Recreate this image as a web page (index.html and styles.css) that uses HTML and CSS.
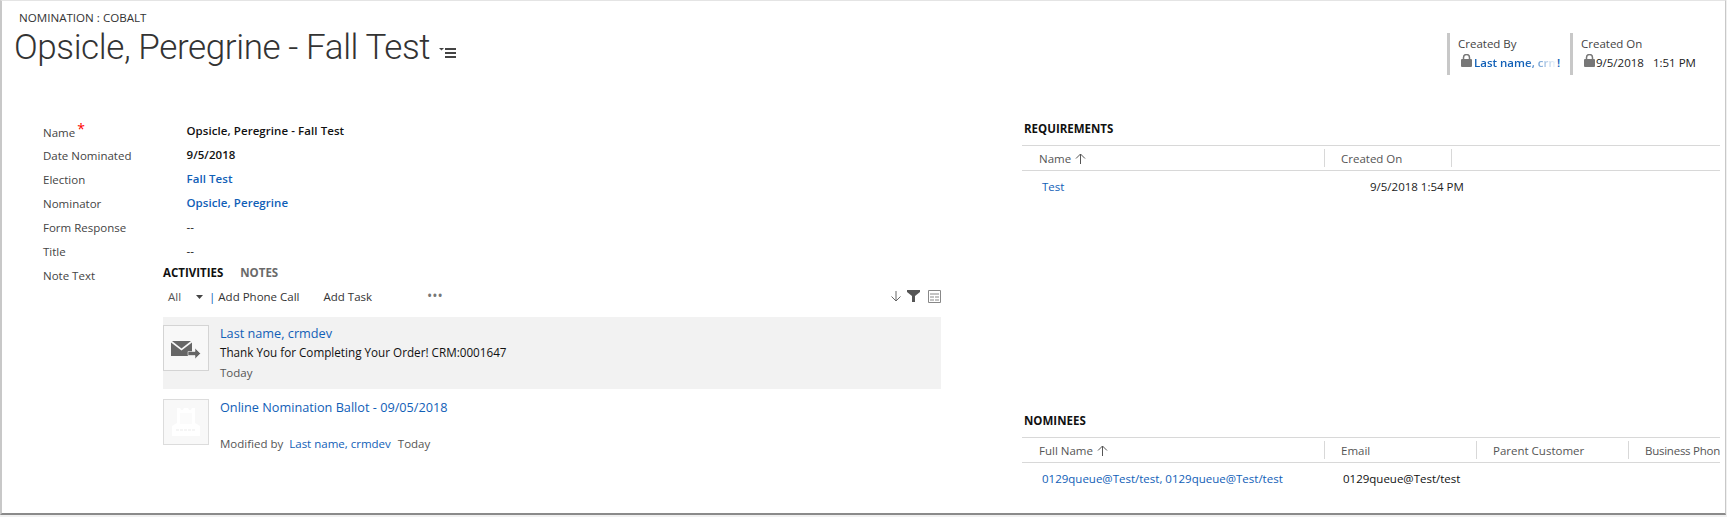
FILE: index.html
```html
<!DOCTYPE html>
<html lang="en">
<head>
    <meta charset="UTF-8">
    <title>Nomination : Cobalt</title>
    <link rel="stylesheet" href="styles.css">
</head>
<body>

<div class="window">
    <!-- Header -->
    <div class="header">
        <div class="title-block">
            <div class="entity-name">NOMINATION : COBALT</div>
            <div class="title-row">
                <h1>Opsicle, Peregrine - Fall Test</h1>
                <svg class="title-menu" width="20" height="12" viewBox="0 0 20 12">
                    <path d="M0 1h5L2.500 3.500z" fill="#444"/>
                    <path d="M6 2h11M6 6h11M6 10h11" stroke="#444" stroke-width="2"/>
                </svg>
            </div>
        </div>
        <div class="header-fields">
            <div class="header-field created-by">
                <div class="header-label">Created By</div>
                <div class="header-value">
                    <svg class="lock" width="11" height="13" viewBox="0 0 11 13"><path d="M2.500 6V3.500a3 3 0 0 1 6 0V6" fill="none" stroke="#777" stroke-width="1.500"/><rect y="5" width="11" height="8" rx="1" fill="#777"/></svg>
                    <a class="fade-link">Last name, crmdev</a><span class="cut-bar">!</span>
                </div>
            </div>
            <div class="header-field created-on">
                <div class="header-label">Created On</div>
                <div class="header-value">
                    <svg class="lock tight" width="11" height="13" viewBox="0 0 11 13"><path d="M2.500 6V3.500a3 3 0 0 1 6 0V6" fill="none" stroke="#777" stroke-width="1.500"/><rect y="5" width="11" height="8" rx="1" fill="#777"/></svg>
                    <span class="created-date">9/5/2018</span><span>1:51 PM</span>
                </div>
            </div>
        </div>
    </div>

    <div class="content">
        <!-- Left column -->
        <div class="left-col">
            <div class="form-row"><div class="form-label">Name<span class="required">*</span></div><div class="form-value bold">Opsicle, Peregrine - Fall Test</div></div>
            <div class="form-row"><div class="form-label">Date Nominated</div><div class="form-value bold">9/5/2018</div></div>
            <div class="form-row"><div class="form-label">Election</div><div class="form-value bold link">Fall Test</div></div>
            <div class="form-row"><div class="form-label">Nominator</div><div class="form-value bold link">Opsicle, Peregrine</div></div>
            <div class="form-row"><div class="form-label">Form Response</div><div class="form-value">--</div></div>
            <div class="form-row"><div class="form-label">Title</div><div class="form-value">--</div></div>

            <div class="note-row">
                <div class="note-label">Note Text</div>
                <div class="wall">
                    <div class="tabs">
                        <span class="tab active">ACTIVITIES</span>
                        <span class="tab">NOTES</span>
                    </div>
                    <div class="wall-toolbar">
                        <span class="filter-all">All</span>
                        <svg class="caret" width="7" height="4" viewBox="0 0 7 4"><path d="M0 0h7L3.500 4z" fill="#444"/></svg>
                        <span class="bar">|</span>
                        <span class="cmd">Add Phone Call</span>
                        <span class="cmd add-task">Add Task</span>
                        <span class="more">•••</span>
                        <div class="toolbar-icons">
                            <svg width="12" height="12" viewBox="0 0 12 12"><path d="M6 1v10M1.500 6.500L6 11l4.500-4.500" fill="none" stroke="#666"/></svg>
                            <svg width="13" height="12" viewBox="0 0 13 12"><path d="M0 0h13v2L8 6v6H5V6L0 2z" fill="#555"/></svg>
                            <svg class="icon-table" width="13" height="13" viewBox="0 0 13 13"><path d="M.5.500h12v12H.5z" fill="#fff" stroke="#888"/><path d="M2 4h9M2 7h4M7 7h4M2 10h4M7 10h4" stroke="#888"/></svg>
                        </div>
                    </div>

                    <div class="activity selected">
                        <div class="activity-icon">
                            <svg width="30" height="22" viewBox="0 0 30 22">
                                <path d="M1 4h19l-9.500 7.500z" fill="#666"/>
                                <path d="M0 5.500V19h17v-4h4V5.500l-10.500 8z" fill="#666"/>
                                <path d="M17 14.500h7V11l5.500 5.500L24 22v-3.500h-7z" fill="#666" stroke="#f8f8f8" stroke-width=".6"/>
                            </svg>
                        </div>
                        <div class="activity-body">
                            <a class="activity-title">Last name, crmdev</a>
                            <div class="activity-text">Thank You for Completing Your Order! CRM:0001647</div>
                            <div class="activity-meta today-line">Today</div>
                        </div>
                    </div>

                    <div class="activity">
                        <div class="activity-icon pale">
                            <svg width="28" height="28" viewBox="0 0 28 28">
                                <path d="M5 0h3l1 2h2l1-2h4l1 2h2l1-2h3v15l5 3v10H0V18l5-3z" fill="#fff"/>
                                <path d="M8 5h12v11H8z" fill="#fbfbfb"/>
                                <path d="M4 22h20" stroke="#f5f5f5" stroke-width="2" stroke-dasharray="3 1"/>
                            </svg>
                        </div>
                        <div class="activity-body">
                            <a class="activity-title">Online Nomination Ballot - 09/05/2018</a>
                            <div class="activity-meta modified-line">
                                <span>Modified by</span><a>Last name, crmdev</a><span>Today</span>
                            </div>
                        </div>
                    </div>
                </div>
            </div>
        </div>

        <!-- Right column -->
        <div class="right-col">
            <section class="subgrid requirements">
                <h2>REQUIREMENTS</h2>
                <div class="grid-head">
                    <div class="col col-name">Name
                        <svg width="11" height="11" viewBox="0 0 11 11"><path d="M5.500 11V1M1 5.500L5.500 1l4.500 4.500" fill="none" stroke="#555"/></svg>
                    </div>
                    <div class="col col-wide">Created On</div>
                </div>
                <div class="grid-row">
                    <a class="cell-name">Test</a>
                    <span class="cell-date">9/5/2018 1:54 PM</span>
                </div>
            </section>

            <section class="subgrid nominees">
                <h2>NOMINEES</h2>
                <div class="grid-head">
                    <div class="col col-name">Full Name
                        <svg width="11" height="11" viewBox="0 0 11 11"><path d="M5.500 11V1M1 5.500L5.500 1l4.500 4.500" fill="none" stroke="#555"/></svg>
                    </div>
                    <div class="col col-mid">Email</div>
                    <div class="col col-mid">Parent Customer</div>
                    <div class="col col-last">Business Phone</div>
                </div>
                <div class="grid-row">
                    <a class="cell-name">0129queue@Test/test, 0129queue@Test/test</a>
                    <span class="cell-email">0129queue@Test/test</span>
                </div>
            </section>
        </div>
    </div>
</div>

</body>
</html>
```

FILE: styles.css
```css
* {
    box-sizing: border-box;
}

body {
    margin: 0;
    width: 1727px;
    height: 517px;
    overflow: hidden;
    background-color: #f0f0f0;
    font-family: "Open Sans", "Noto Sans", sans-serif;
    font-size: 11.500px;
    color: #222;
}

a {
    color: #1160b7;
}

/* Window frame */
.window {
    width: 1726px;
    height: 515px;
    background-color: #fff;
    border-top: 1px solid #e4e4e4;
    border-left: 2px solid #c8c8c8;
    border-right: 1px solid #c8c8c8;
    border-bottom: 2px solid #8a8a8a;
    overflow: hidden;
}

/* Header */
.header {
    display: flex;
    justify-content: space-between;
    height: 112px;
}

.title-block {
    padding: 9px 0 0 12px;
}

.entity-name {
    margin-left: 5px;
    font-size: 11.600px;
    line-height: 16px;
    color: #333;
}

.title-row {
    display: flex;
    align-items: center;
}

h1 {
    margin: -1px 0 0;
    font-family: Roboto, "Open Sans", sans-serif;
    font-size: 35px;
    font-weight: 300;
    line-height: 46px;
    letter-spacing: -0.4px;
    color: #333;
}

.title-menu {
    margin: 8px 0 0 9px;
}

.header-fields {
    display: flex;
    margin: 32px 0 0 0;
    height: 42px;
}

.header-field {
    border-left: 3px solid #c8c8c8;
    padding: 2px 0 0 8px;
    height: 42px;
}

.created-by {
    width: 123px;
}

.created-on {
    width: 155px;
}

.header-label {
    font-size: 11.500px;
    line-height: 18px;
    color: #444;
}

.header-value {
    display: flex;
    align-items: center;
    margin-left: 3px;
    font-size: 11.500px;
    line-height: 19px;
}

.lock {
    margin: -5px 2px 0 0;
    flex: none;
}

.lock.tight {
    margin-right: 1px;
}

.fade-link {
    width: 83px;
    overflow: hidden;
    white-space: nowrap;
    font-weight: 600;
    -webkit-mask-image: linear-gradient(to right, #000 62%, transparent 100%);
    mask-image: linear-gradient(to right, #000 62%, transparent 100%);
}

.cut-bar {
    color: #1160b7;
    font-weight: 600;
}

.created-date {
    margin-right: 9px;
}

/* Two columns */
.content {
    display: flex;
}

.left-col {
    width: 1020px;
    padding-top: 6px;
}

.right-col {
    width: 698px;
}

/* Form rows */
.form-row {
    display: flex;
    height: 24px;
    line-height: 24px;
}

.form-label {
    width: 143.500px;
    margin-left: 41px;
    padding-top: 1px;
    color: #444;
}

.required {
    position: relative;
    top: -3px;
    margin-left: 2px;
    color: #f00;
    font-size: 14px;
}

.form-value {
    color: #111;
}

.bold {
    font-weight: 600;
    letter-spacing: 0.07px;
}

.link {
    color: #1160b7;
}

/* Note text and activity wall */
.note-row {
    display: flex;
    height: 240px;
}

.note-label {
    width: 120px;
    margin-left: 41px;
    padding-top: 1px;
    line-height: 24px;
    color: #444;
}

.wall {
    width: 778px;
}

.tabs {
    display: flex;
    gap: 17px;
    margin-top: 1px;
    font-size: 11.500px;
    font-weight: 700;
    line-height: 18px;
    color: #6a6a6a;
}

.tab.active {
    color: #111;
}

.wall-toolbar {
    display: flex;
    align-items: center;
    height: 26px;
    margin-top: 1px;
    padding-left: 5px;
    color: #333;
}

.filter-all {
    width: 28px;
    color: #555;
}

.caret {
    margin: 2px 6px 0 0;
}

.bar {
    margin-right: 3px;
    color: #1160b7;
}

.cmd {
    margin-right: 24px;
}

.add-task {
    margin-right: 55px;
}

.more {
    font-size: 14px;
    line-height: 14px;
    color: #777;
}

.toolbar-icons {
    display: flex;
    align-items: center;
    gap: 5px;
    margin-left: auto;
}

.icon-table {
    margin-left: 3px;
}

.activity {
    display: flex;
    height: 72px;
    padding-top: 8px;
}

.activity.selected {
    background-color: #f2f2f2;
    margin-top: 8px;
    margin-bottom: 2px;
}

.activity-icon {
    display: flex;
    align-items: center;
    justify-content: center;
    width: 46px;
    height: 46px;
    border: 1px solid #d4d4d4;
    background-color: #f8f8f8;
    flex: none;
}

.activity-icon.pale {
    border-color: #dcdcdc;
}

.activity-body {
    margin: -1px 0 0 11px;
}

.activity-title {
    display: block;
    font-size: 12.700px;
    line-height: 18px;
}

.activity-text {
    margin-top: 1px;
    font-size: 11.700px;
    line-height: 18px;
    color: #111;
}

.activity-meta {
    color: #555;
    line-height: 18px;
}

.today-line {
    margin-top: 3px;
}

.modified-line {
    display: flex;
    gap: 6px;
    margin-top: 19px;
}

.modified-line span:last-child {
    margin-left: 1px;
}

/* Sub grids */
.subgrid h2 {
    margin: 0 0 0 2px;
    font-size: 11.500px;
    font-weight: 700;
    line-height: 18px;
    color: #111;
}

.requirements {
    height: 299px;
    padding-top: 7px;
}

.grid-head {
    display: flex;
    align-items: center;
    height: 26px;
    margin-top: 7px;
    border-top: 1px solid #d8d8d8;
    border-bottom: 1px solid #d8d8d8;
    color: #555;
}

.col {
    display: flex;
    align-items: center;
    gap: 4px;
    height: 18px;
    white-space: nowrap;
    overflow: hidden;
    border-right: 1px solid #d8d8d8;
    padding-left: 16px;
}

.col-name {
    width: 303px;
    padding-left: 17px;
}

.col-wide {
    width: 127px;
}

.col-mid {
    width: 152px;
}

.col-last {
    width: 91px;
    border-right: none;
    letter-spacing: -0.25px;
}

.grid-row {
    display: flex;
    align-items: center;
    height: 31px;
    color: #222;
}

.cell-name {
    width: 303px;
    padding-left: 20px;
    white-space: nowrap;
}

.cell-date {
    margin-left: 45px;
}

.cell-email {
    margin-left: 18px;
    color: #111;
}
```
